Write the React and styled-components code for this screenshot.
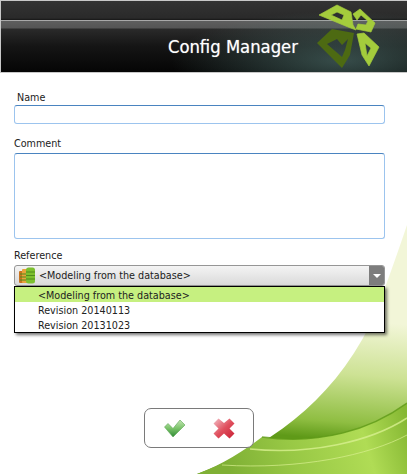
import React from 'react';
import styled, { createGlobalStyle } from 'styled-components';

const GlobalStyle = createGlobalStyle`
  html, body {
    margin: 0;
    padding: 0;
    background: #fff;
  }
  * {
    box-sizing: border-box;
  }
`;

const Window = styled.div`
  position: relative;
  width: 407px;
  height: 474px;
  overflow: hidden;
  background: #fff;
  font-family: 'DejaVu Sans Condensed', 'DejaVu Sans', sans-serif;
  font-stretch: condensed;
  font-size: 10.7px;
  color: #222;
`;

const Swoosh = styled.svg`
  position: absolute;
  left: 0;
  top: 0;
  width: 407px;
  height: 474px;
`;

const Header = styled.header`
  position: relative;
  display: flex;
  align-items: center;
  justify-content: flex-end;
  height: 73px;
  padding: 20px 109px 0 0;
  border: 1px solid #c8c8c8;
  border-right: 0;
  background:
    radial-gradient(ellipse 170px 50px at 340px 60px, rgba(90, 130, 125, 0.55), rgba(90, 130, 125, 0) 100%),
    linear-gradient(to bottom, #333 0, #2a2a2a 17px, #161616 19px, #b0b0b0 19px, #a0a0a0 20px, #5e5e5e 20px, #555 27px, #2a2a2a 28px, #151515 45px, #050505 71px);
`;

const Title = styled.h1`
  margin: 0;
  font-size: 18.3px;
  font-weight: 400;
  color: #fff;
  text-shadow: 0 0 1px rgba(255, 255, 255, 0.6);
`;

const Logo = styled.svg`
  position: absolute;
  top: -1px;
  right: 0;
  width: 127px;
  height: 73px;
`;

const Form = styled.main`
  position: relative;
  display: flex;
  flex-direction: column;
  padding: 16px 22px 0 14px;
`;

const Label = styled.label`
  display: block;
  height: 15px;
  margin-left: ${(p) => p.$indent || 0}px;
  line-height: ${(p) => (p.$indent ? 17 : 15)}px;
`;

const TextInput = styled.div`
  width: 371px;
  height: 19px;
  margin-top: 1px;
  margin-bottom: 12px;
  background: #fff;
  border: 1px solid #9cc4ee;
  border-top-color: #4a84c0;
  border-radius: 3px;
`;

const TextArea = styled(TextInput)`
  height: 86px;
  margin-top: 2px;
  margin-bottom: 9px;
`;

const Select = styled.div`
  display: flex;
  align-items: center;
  width: 371px;
  height: 21px;
  margin-top: 2px;
  padding-left: 4px;
  background: linear-gradient(to bottom, #f4f4f4, #dadada);
  border: 1px solid #969696;
  border-radius: 3px;
`;

const SelectText = styled.span`
  flex: 1;
  margin-left: 3px;
  white-space: nowrap;
`;

const SelectArrow = styled.span`
  display: flex;
  align-items: center;
  justify-content: center;
  width: 15px;
  height: 19px;
  background: #7d7d7d;
  border-radius: 0 2px 2px 0;
  &::after {
    content: '';
    border-left: 4px solid transparent;
    border-right: 4px solid transparent;
    border-top: 4px solid #fff;
  }
`;

const Menu = styled.ul`
  width: 371px;
  margin: 0;
  padding: 0;
  list-style: none;
  background: #fff;
  border: 1px solid #000;
  box-shadow: 2px 2px 3px rgba(0, 0, 0, 0.55);
`;

const MenuItem = styled.li`
  height: 15px;
  padding-left: 23px;
  line-height: 17px;
  background: ${(p) => (p.$selected ? '#c6f080' : 'transparent')};
`;

const ButtonBar = styled.div`
  position: absolute;
  left: 144px;
  top: 408px;
  display: flex;
  align-items: center;
  gap: 27px;
  width: 110px;
  height: 40px;
  padding-left: 19px;
  border: 1px solid #7a7a7a;
  border-radius: 7px;
  background: #fff;
`;

const IconButton = styled.button`
  display: flex;
  padding: 0;
  border: 0;
  background: none;
`;

const DbIcon = () => (
  <svg width="17" height="17" viewBox="0 0 17 17">
    <rect x="0" y="4" width="5" height="12" rx="1" fill="#c9741f" />
    <rect x="3" y="2" width="6" height="14" rx="1" fill="#e8a33a" />
    <rect x="7" y="0.5" width="9" height="16" rx="2.5" fill="#7cc02f" />
    <path d="M7 5h9M7 8.5h9M7 12h9M1 7h6M1 10h6M1 13h6" stroke="#4f8a1c" strokeWidth="1" />
  </svg>
);

const CheckIcon = () => (
  <svg width="22" height="19" viewBox="0 0 22 19">
    <defs>
      <linearGradient id="chk" x1="0" y1="0" x2="0" y2="1">
        <stop offset="0" stopColor="#c3e6b4" />
        <stop offset="0.5" stopColor="#79c268" />
        <stop offset="1" stopColor="#2f8a37" />
      </linearGradient>
    </defs>
    <path d="M0.5 8 L4 4.5 L9 9.5 L16 1 L21 6 L9 18 Z" fill="url(#chk)" stroke="#5aa653" strokeWidth="0.6" />
  </svg>
);

const CrossIcon = () => (
  <svg width="23" height="21" viewBox="0 0 23 21">
    <defs>
      <linearGradient id="crs" x1="0" y1="0" x2="1" y2="1">
        <stop offset="0" stopColor="#f3c0c8" />
        <stop offset="0.5" stopColor="#e0505e" />
        <stop offset="1" stopColor="#c81f33" />
      </linearGradient>
    </defs>
    <path d="M0.5 5.5 L5.5 0.5 L11 5 L16.5 0.5 L21.5 5.5 L16.5 10.5 L21.5 15.5 L16.5 20.5 L11 15.5 L5.5 20.5 L0.5 15.5 L5.5 10.5 Z" fill="url(#crs)" />
  </svg>
);

const App = () => (
  <Window>
    <GlobalStyle />
    <Swoosh viewBox="0 0 407 474">
      <defs>
        <linearGradient id="sw1" gradientUnits="userSpaceOnUse" x1="350" y1="320" x2="340" y2="440">
          <stop offset="0" stopColor="#f2f6d8" />
          <stop offset="0.45" stopColor="#cde294" />
          <stop offset="0.85" stopColor="#8fbe42" />
          <stop offset="1" stopColor="#5f9a18" />
        </linearGradient>
        <linearGradient id="sw2" gradientUnits="userSpaceOnUse" x1="230" y1="474" x2="407" y2="420">
          <stop offset="0" stopColor="#7fb035" />
          <stop offset="0.35" stopColor="#98c845" />
          <stop offset="0.75" stopColor="#b0dc55" />
          <stop offset="1" stopColor="#86b833" />
        </linearGradient>
      </defs>
      <path d="M197 474 C265 448 330 405 370 325 C385 290 395 260 407 225 L407 474 Z" fill="url(#sw1)" />
      <path d="M262 437 C320 445 370 430 407 403 L407 474 L197 474 C222 465 245 450 262 437 Z" fill="url(#sw2)" />
      <path d="M262 437 C320 445 370 430 407 403" fill="none" stroke="#5f9a18" strokeWidth="1.5" opacity="0.8" />
      <path d="M250 449 C310 455 370 442 407 418" fill="none" stroke="#d8f090" strokeWidth="1.5" opacity="0.8" />
      <path d="M222 465 C300 470 370 455 407 435" fill="none" stroke="#d8f090" strokeWidth="1" opacity="0.7" />
    </Swoosh>
    <Header>
      <Title>Config Manager</Title>
      <Logo viewBox="280 0 127 73">
        <g fill="#a4cc3c" stroke="#a4cc3c" strokeWidth="0.7" fillRule="evenodd">
          <path d="M319 15 L337 5 L351 12 L353 25 L356 30 L348 27 Z M331 15 L342 20 L344 15 L337 12 Z" />
          <path d="M353 14 L360 9 L375 23 L371 32 L356 29 L358 24 L366 25 L368 21 L361 15 L357 20 Z" />
          <path d="M357 34 L364 33 L379 47 L369 66 L362 55 Z M365 43 L367 56 L371 48 Z" />
        </g>
        <path fillRule="evenodd" d="M332 29 L354 33 L350 55 L342 68 L317 43 Z M337 39 L327 44 L342 57 L345 50 L348 39 L342 45 Z" fill="#4d6a12" />
      </Logo>
    </Header>
    <Form>
      <Label $indent={3}>Name</Label>
      <TextInput />
      <Label>Comment</Label>
      <TextArea />
      <Label>Reference</Label>
      <Select>
        <DbIcon />
        <SelectText>&lt;Modeling from the database&gt;</SelectText>
        <SelectArrow />
      </Select>
      <Menu>
        <MenuItem $selected>&lt;Modeling from the database&gt;</MenuItem>
        <MenuItem>Revision 20140113</MenuItem>
        <MenuItem>Revision 20131023</MenuItem>
      </Menu>
    </Form>
    <ButtonBar>
      <IconButton><CheckIcon /></IconButton>
      <IconButton><CrossIcon /></IconButton>
    </ButtonBar>
  </Window>
);

export default App;
